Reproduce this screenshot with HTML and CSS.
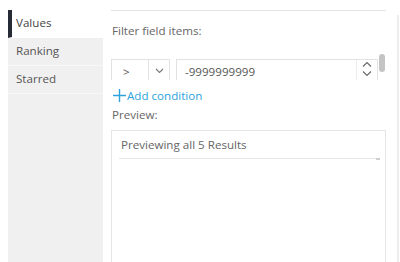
FILE: index.html
```html
<!DOCTYPE html>
<html>
<head>
<meta charset="utf-8">
<link rel="stylesheet" href="styles.css">
</head>
<body>
<div class="app">
  <nav class="side">
    <div class="item active">Values</div>
    <div class="item">Ranking</div>
    <div class="item">Starred</div>
    <div class="fill"></div>
  </nav>
  <main class="main">
    <div class="topline"></div>
    <div class="lbl first">Filter field items:</div>
    <div class="conds">
      <div class="cond">
        <div class="op">
          <span class="opval">&gt;</span>
          <span class="opcaret"><svg width="9" height="6" viewBox="0 0 9 6"><path d="M1 1l3.5 3.5L8 1" fill="none" stroke="#777" stroke-width="1.1"/></svg></span>
        </div>
        <div class="num">
          <span class="numval">-9999999999</span>
          <span class="spin"><svg width="10" height="16" viewBox="0 0 10 16"><path d="M1 5.5l4-4 4 4M1 10.5l4 4 4-4" fill="none" stroke="#666" stroke-width="1.1"/></svg></span>
        </div>
      </div>
      <div class="thumb"></div>
    </div>
    <div class="add"><svg width="13" height="13" viewBox="0 0 13 13"><path d="M6.5 0v13M0 6.5h13" stroke="#2da3dc" stroke-width="1.4"/></svg>Add condition</div>
    <div class="lbl">Preview:</div>
    <div class="preview">
      <div class="ptitle">Previewing all 5 Results</div>
      <div class="prule"><span class="pmark"></span></div>
    </div>
  </main>
  <div class="edge"></div>
</div>
</body>
</html>
```
FILE: styles.css
```css
html, body { margin: 0; padding: 0; background: #fff; }
body { font-family: "Open Sans", "Liberation Sans", sans-serif; font-size: 11.6px; color: #666; overflow: hidden; }
.app { display: flex; height: 262px; }
.side { width: 95px; margin-left: 8px; margin-top: 10px; display: flex; flex-direction: column; flex-shrink: 0; }
.item { height: 27px; line-height: 26px; padding-left: 8px; background: #f0f0f0; border-bottom: 1px solid #f8f8f8; color: #555; }
.item.active { background: #fff; border-left: 4px solid #262b36; padding-left: 4px; border-bottom-color: #fff; color: #444; }
.fill { flex: 1; background: #f0f0f0; }
.main { width: 275px; margin-left: 8px; padding-top: 10px; display: flex; flex-direction: column; }
.topline { height: 1px; background: #e3e3e3; }
.lbl { height: 18px; line-height: 18px; padding-left: 1px; color: #666; margin-top: 2px; }
.lbl.first { margin-top: 11px; }
.conds { position: relative; height: 26px; margin-top: 14px; overflow: hidden; padding-top: 5px; box-sizing: border-box; }
.cond { display: flex; height: 26px; width: 267px; gap: 6px; }
.op { display: flex; width: 59px; border: 1px solid #e2e2e2; box-sizing: border-box; }
.opval { width: 37px; border-right: 1px solid #e2e2e2; padding-left: 11px; padding-top: 4px; box-sizing: border-box; line-height: 15px; color: #555; }
.opcaret { flex: 1; display: flex; justify-content: center; padding-top: 8px; }
.num { flex: 1; display: flex; border: 1px solid #e2e2e2; box-sizing: border-box; }
.numval { flex: 1; padding-left: 8px; padding-top: 4px; line-height: 15px; color: #555; border-right: 1px solid #ececec; }
.spin { width: 20px; display: flex; justify-content: center; padding-top: 1px; }
.thumb { position: absolute; right: 1px; top: 0; width: 6px; height: 18px; background: #c4c4c4; border-radius: 3px; }
.add { display: flex; align-items: center; margin-top: 6px; height: 18px; color: #2da3dc; padding-left: 2px; }
.add svg { margin-right: 1px; }
.preview { margin-top: 6px; flex: 1; border: 1px solid #e6e6e6; border-bottom: none; padding: 5px 5px 0 7px; }
.ptitle { line-height: 18px; height: 22px; padding-left: 2px; color: #666; }
.prule { position: relative; height: 1px; background: #e8e8e8; margin-right: 4px; }
.pmark { position: absolute; right: -4px; top: 0; width: 4px; height: 2px; background: #cfcfcf; }
.edge { width: 2px; margin-left: 11px; margin-top: 15px; background: #ececec; }
```
